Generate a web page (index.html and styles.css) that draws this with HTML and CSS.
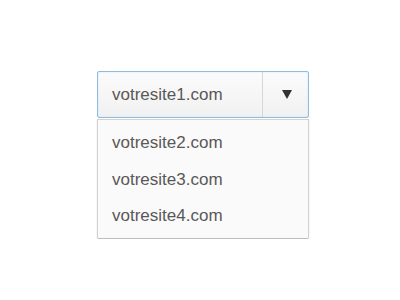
FILE: index.html
```html
<!DOCTYPE html>
<html>
<head>
<meta charset="utf-8">
<link rel="stylesheet" href="styles.css">
</head>
<body>
<div class="dropdown">
  <div class="select">
    <span class="value">votresite1.com</span>
    <span class="toggle"><span class="arrow"></span></span>
  </div>
  <ul class="menu">
    <li>votresite2.com</li>
    <li>votresite3.com</li>
    <li>votresite4.com</li>
  </ul>
</div>
</body>
</html>
```
FILE: styles.css
```css
html, body {
  margin: 0;
  padding: 0;
  background: #ffffff;
}
body {
  font-family: "Liberation Sans", Arial, sans-serif;
  color: #585858;
  font-size: 17px;
}
.dropdown {
  margin: 71px 0 0 97px;
  width: 212px;
}
.select {
  box-sizing: border-box;
  height: 47px;
  display: flex;
  border: 1px solid #8dbce2;
  border-radius: 2px;
  background: linear-gradient(#fbfbfb, #f1f1f1);
  box-shadow: inset 0 0 2px rgba(141,188,226,0.35);
}
.value {
  box-sizing: border-box;
  width: 165px;
  display: flex;
  align-items: center;
  padding-left: 14px;
  border-right: 1px solid #d6d6d6;
}
.toggle {
  flex: 1;
  display: flex;
  align-items: center;
  justify-content: center;
}
.arrow {
  width: 0;
  height: 0;
  border-left: 5px solid transparent;
  border-right: 5px solid transparent;
  border-top: 9px solid #333333;
  margin-left: 2px;
}
.menu {
  list-style: none;
  margin: 1px 0 0 0;
  padding: 5px 0 5px 0;
  box-sizing: border-box;
  height: 120px;
  background: #fafafa;
  border: 1px solid #d2d2d2;
  border-bottom-color: #bdbdbd;
  border-radius: 0 0 2px 2px;
  box-shadow: 0 1px 2px rgba(0,0,0,0.12);
}
.menu li {
  height: 36.5px;
  display: flex;
  align-items: center;
  padding-left: 14px;
}
```
